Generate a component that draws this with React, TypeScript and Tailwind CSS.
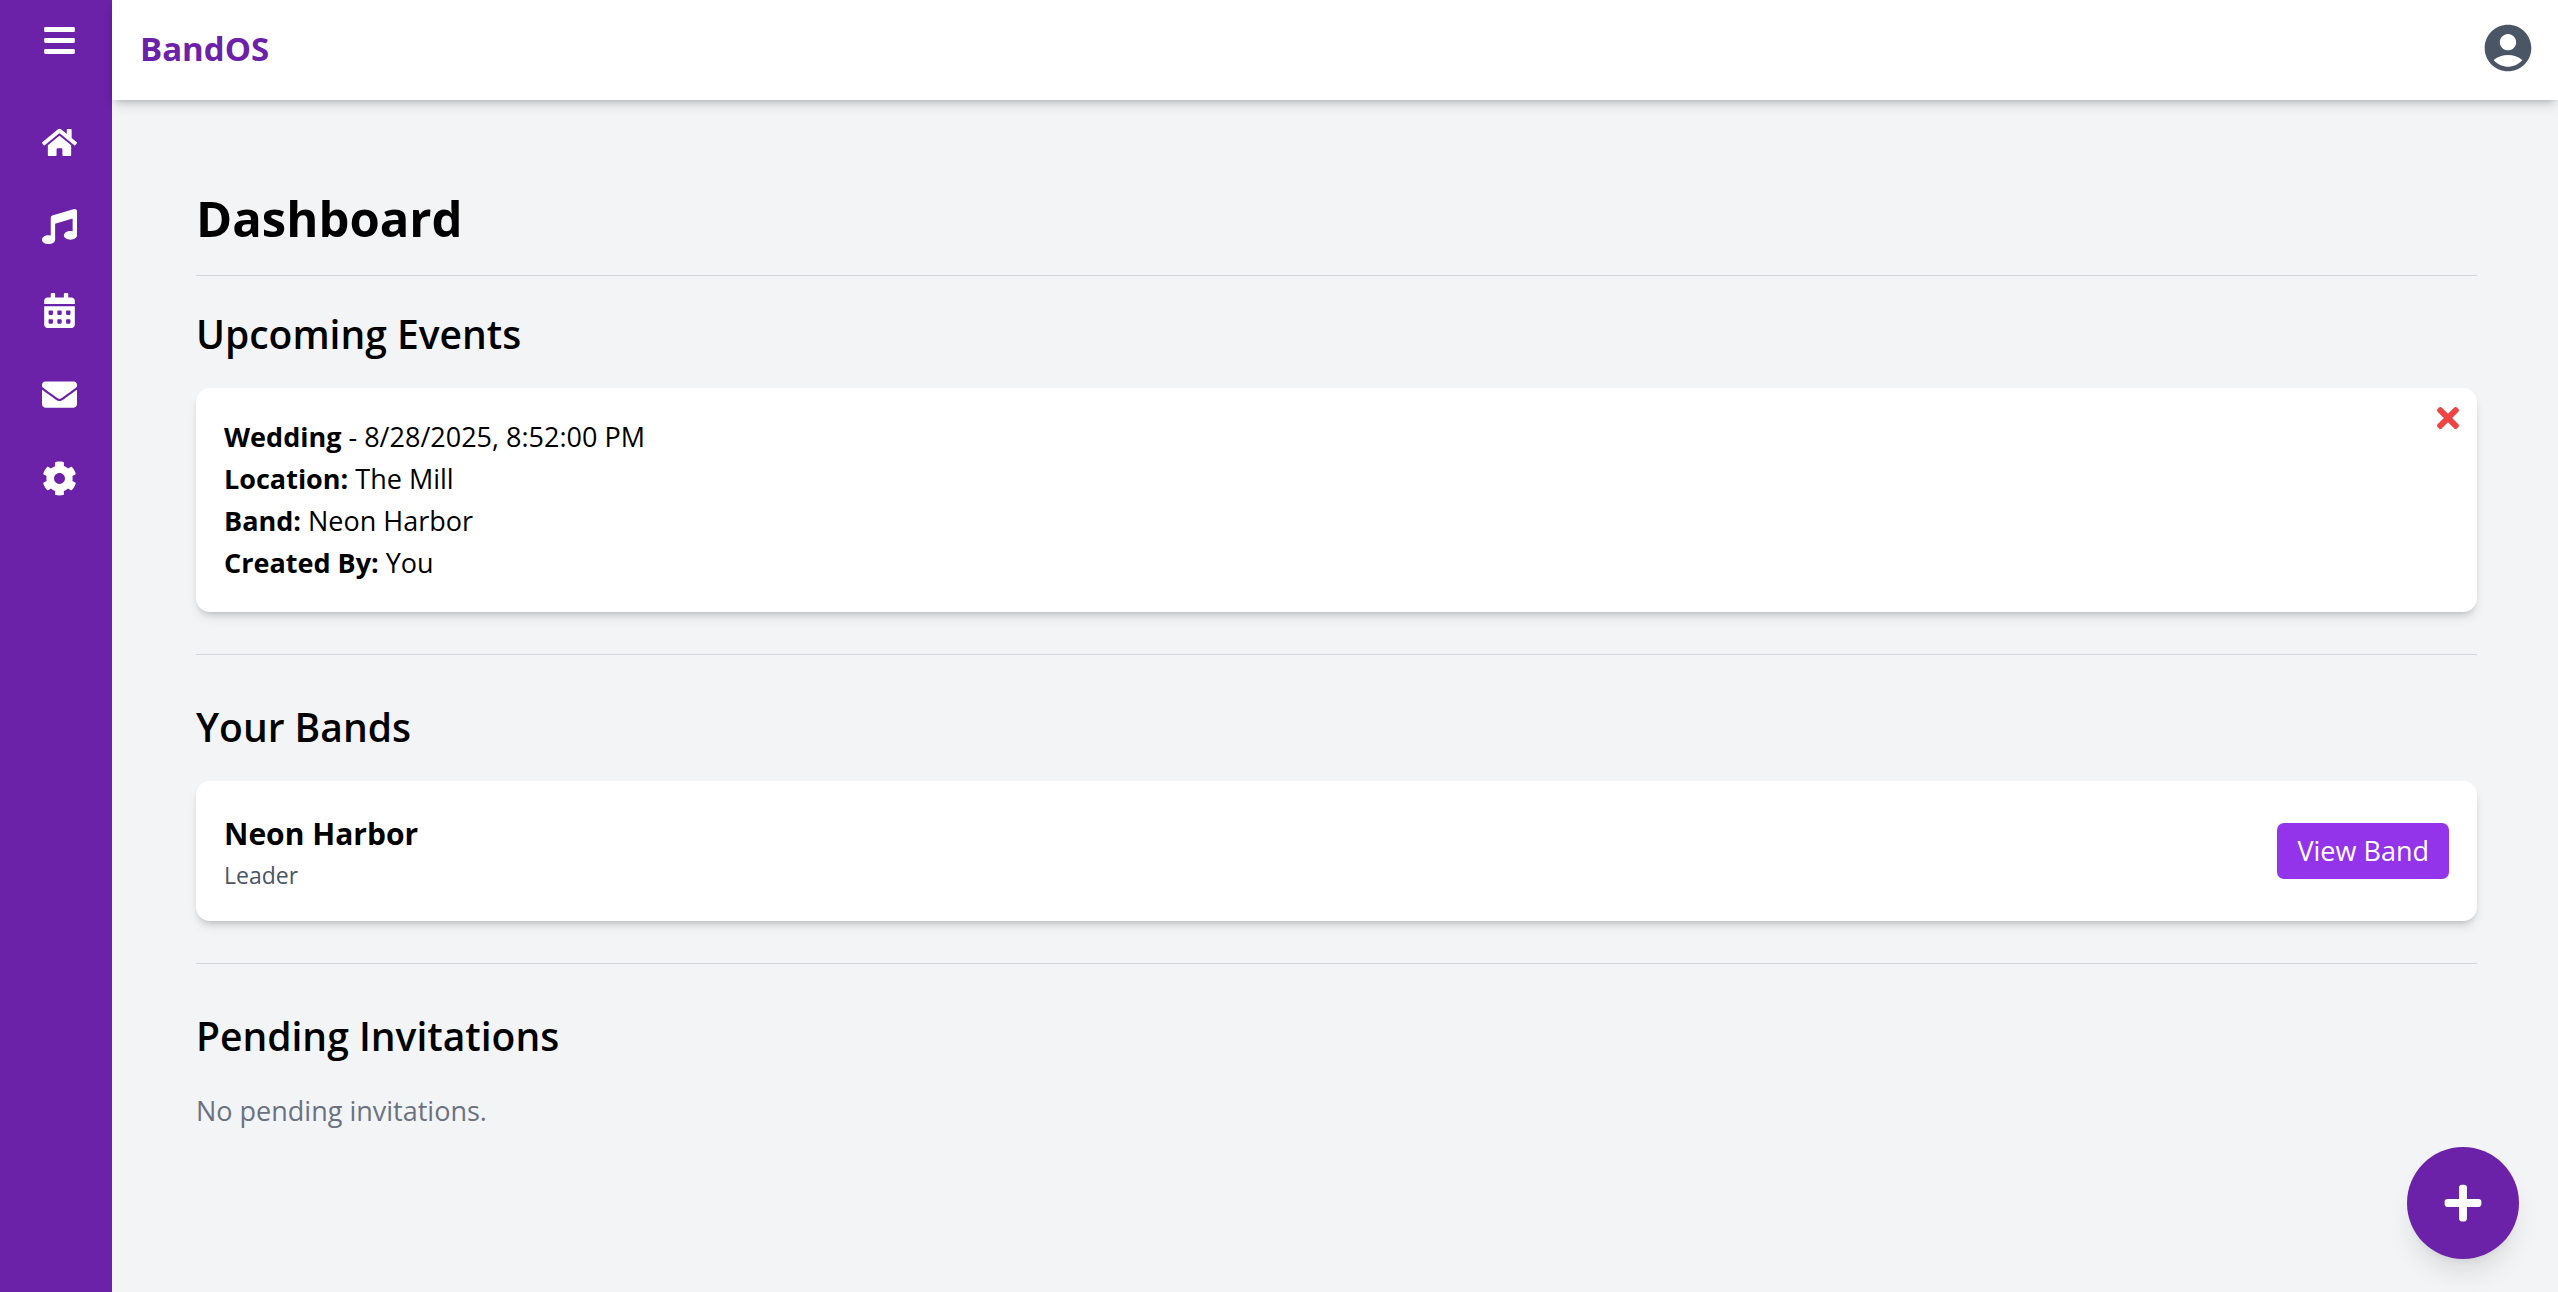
import { FaBars, FaCalendarAlt, FaCog, FaEnvelope, FaHome, FaMusic, FaPlus, FaTimes } from "react-icons/fa";
import { MdAccountCircle } from "react-icons/md";

const links = [
  { label: "Home", Icon: FaHome },
  { label: "Bands", Icon: FaMusic },
  { label: "Calendar", Icon: FaCalendarAlt },
  { label: "Messages", Icon: FaEnvelope },
  { label: "Settings", Icon: FaCog },
];

const details = [
  { term: "Location:", value: "The Mill" },
  { term: "Band:", value: "Neon Harbor" },
  { term: "Created By:", value: "You" },
];

const card = "rounded-[14px] bg-white shadow-[0_7px_11px_-2px_rgba(0,0,0,0.1),0_4px_7px_-4px_rgba(0,0,0,0.25)]";
const heading = "text-[39px] leading-[59px] font-semibold";

function Sidebar() {
  return (
    <aside className="flex w-28 shrink-0 flex-col items-center bg-[#6b21a8] pt-[23px] pl-[7px] text-[35px] text-white">
      <button type="button" aria-label="Toggle menu">
        <FaBars />
      </button>
      <nav className="mt-[67px] flex flex-col gap-[49px]">
        {links.map(({ label, Icon }) => (
          <a key={label} href="#" aria-label={label}>
            <Icon />
          </a>
        ))}
      </nav>
    </aside>
  );
}

function Header() {
  return (
    <header className="flex h-[100px] items-center justify-between bg-white pr-[22px] pb-[2px] pl-7 shadow-[0_7px_11px_-2px_rgba(0,0,0,0.12),0_4px_7px_-4px_rgba(0,0,0,0.25)]">
      <span className="text-[33px] leading-[48px] font-bold text-[#6b21a8]">BandOS</span>
      <button type="button" aria-label="Account" className="pb-[2px] text-[56px] text-gray-600">
        <MdAccountCircle />
      </button>
    </header>
  );
}

export default function App() {
  return (
    <div className="flex min-h-screen bg-[#f3f4f6] font-['Open_Sans',sans-serif] text-black">
      <Sidebar />
      <div className="min-w-0 flex-1">
        <Header />
        <main className="pt-[84px] pr-[81px] pl-[84px]">
          <h1 className="text-[49px] leading-[68px] font-bold">Dashboard</h1>
          <hr className="mt-[23px] border-gray-300" />

          <section className="pt-7">
            <h2 className={heading}>Upcoming Events</h2>
            <article className={"relative mt-[25px] p-7 text-[27px] leading-[42px] " + card}>
              <p>
                <strong className="font-bold">Wedding</strong> - 8/28/2025, 8:52:00 PM
              </p>
              {details.map(({ term, value }) => (
                <p key={term}>
                  <strong className="font-bold">{term}</strong> {value}
                </p>
              ))}
              <button type="button" aria-label="Delete event" className="absolute top-[14px] right-[18px] text-[32px] text-[#ef4444]">
                <FaTimes className="w-[22px]" />
              </button>
            </article>
          </section>
          <hr className="mt-[42px] border-gray-300" />

          <section className="pt-[42px]">
            <h2 className={heading}>Your Bands</h2>
            <article className={"mt-[25px] flex items-center justify-between p-7 " + card}>
              <div>
                <h3 className="text-[30px] leading-[49px] font-bold">Neon Harbor</h3>
                <p className="text-[23px] leading-[35px] text-gray-600">Leader</p>
              </div>
              <button type="button" className="h-14 rounded-[7px] bg-[#9333ea] px-5 text-[27px] leading-[42px] text-white">
                View Band
              </button>
            </article>
          </section>
          <hr className="mt-[42px] border-gray-300" />

          <section className="pt-[42px]">
            <h2 className={heading}>Pending Invitations</h2>
            <p className="mt-[25px] text-[27px] leading-[42px] text-gray-500">No pending invitations.</p>
          </section>
        </main>
      </div>
      <button
        type="button"
        aria-label="Create"
        className="fixed right-[39px] bottom-[33px] flex size-28 items-center justify-center rounded-full bg-[#6b21a8] text-[42px] text-white shadow-[0_18px_26px_-5px_rgba(0,0,0,0.1),0_7px_11px_-7px_rgba(0,0,0,0.1)]"
      >
        <FaPlus />
      </button>
    </div>
  );
}
